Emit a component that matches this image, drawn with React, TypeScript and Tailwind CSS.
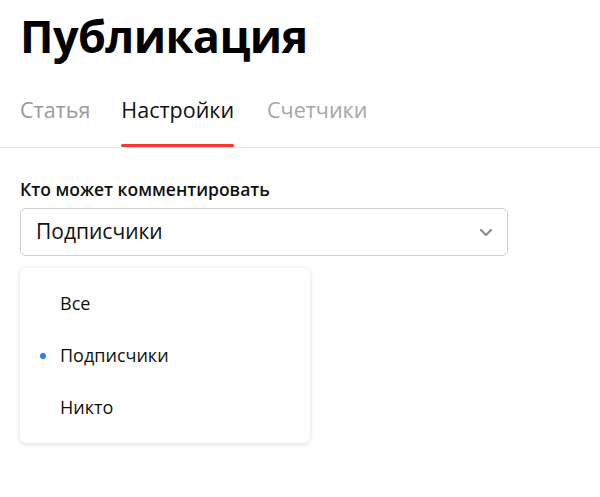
import React from "react";

export default function App() {
  const font = { fontFamily: '"Open Sans", "Noto Sans", sans-serif' };
  return (
    <div className="w-[600px] h-[497px] bg-white text-black" style={font}>
      <h1 className="px-5 pt-[6px] text-[45px] leading-[60px] font-bold tracking-[-0.6px]">Публикация</h1>
      <div className="mt-[30px] border-b border-[#e6e6e6] flex px-5 gap-[31px] text-[21.5px] leading-[28px]">
        <div className="pb-[23px] text-[#999]">Статья</div>
        <div className="relative pb-[23px] text-[#111]">
          Настройки
          <div className="absolute left-0 right-0 bottom-[0px] h-[3px] rounded-full bg-[#f33a2e]" />
        </div>
        <div className="pb-[23px] text-[#a6a6a6] ml-[2px]">Счетчики</div>
      </div>
      <div className="px-5 pt-[30px]">
        <div className="text-[17.5px] leading-[22px] font-semibold text-[#111]">Кто может комментировать</div>
        <div className="mt-[8px] w-[488px] h-[48px] border border-[#cfcfcf] rounded-[6px] flex items-center justify-between pl-[15px] pr-[14px]">
          <span className="text-[21px] text-[#111]">Подписчики</span>
          <svg width="14" height="9" viewBox="0 0 14 9">
            <path d="M2 2l5 5 5-5" fill="none" stroke="#8c8c8c" strokeWidth="2.2" strokeLinecap="round" strokeLinejoin="round" />
          </svg>
        </div>
        <div className="mt-[12px] w-[290px] h-[175px] rounded-[6px] bg-white shadow-[0_1px_5px_rgba(0,0,0,0.15)] flex flex-col justify-center py-[8px]">
          {["Все", "Подписчики", "Никто"].map((t, i) => (
            <div key={t} className="h-[52px] flex items-center pl-[20px] text-[18px] text-[#111]">
              <span className="w-[20px] flex items-center">
                {i === 1 && <span className="block w-[6px] h-[6px] rounded-full bg-[#2f7bf5]" />}
              </span>
              <span>{t}</span>
            </div>
          ))}
        </div>
      </div>
    </div>
  );
}
